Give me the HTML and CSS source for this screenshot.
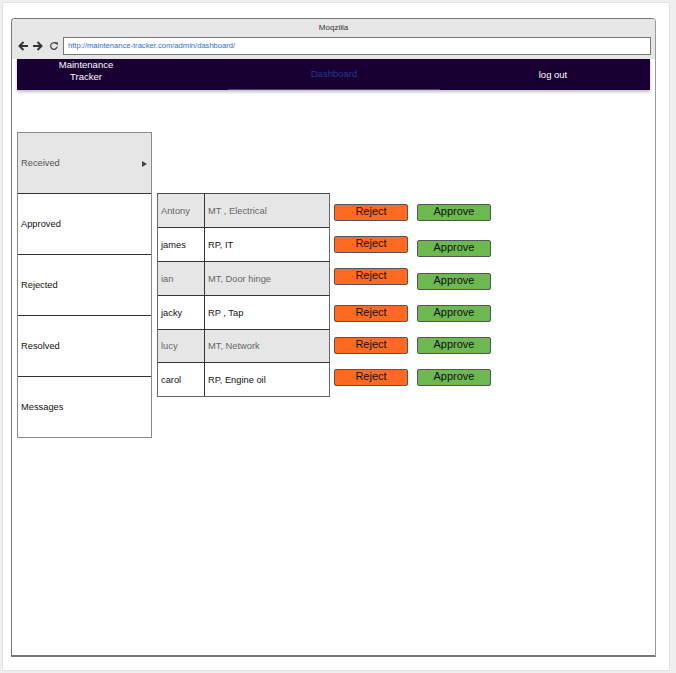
FILE: index.html
```html
<!DOCTYPE html>
<html>
<head>
<meta charset="utf-8">
<link rel="stylesheet" href="styles.css">
</head>
<body>
<div class="frame">
  <div class="window">
    <div class="titlebar">
      <div class="title">Moqzilla</div>
      <div class="urlrow">
        <svg class="ico" width="12" height="12" viewBox="0 0 12 12"><path d="M11 6H2.5M6.5 2L2.5 6L6.5 10" fill="none" stroke="#333" stroke-width="2"/></svg>
        <svg class="ico fwd" width="12" height="12" viewBox="0 0 12 12"><path d="M1 6H9.5M5.5 2L9.5 6L5.5 10" fill="none" stroke="#333" stroke-width="2"/></svg>
        <svg class="ico rel" width="10" height="10" viewBox="0 0 10 10"><path d="M8.2 5.6A3.3 3.3 0 1 1 7.2 2.6" fill="none" stroke="#444" stroke-width="1.2"/><path d="M5.6 1.2L8.8 1.2L8.8 4.4Z" fill="#444"/></svg>
        <div class="url">http://maintenance-tracker.com/admin/dashboard/</div>
      </div>
    </div>
    <div class="content">
      <nav class="navbar">
        <div class="brand">Maintenance<br>Tracker</div>
        <div class="spacer"></div>
        <div class="navmid">Dashboard</div>
        <div class="navright">log out</div>
      </nav>
      <div class="main">
        <div class="sidebar">
          <div class="side-item active">Received<span class="tri"></span></div>
          <div class="side-item">Approved</div>
          <div class="side-item">Rejected</div>
          <div class="side-item">Resolved</div>
          <div class="side-item">Messages</div>
        </div>
        <div class="tbl">
          <div class="row odd"><div class="c1">Antony</div><div class="c2">MT , Electrical</div></div>
          <div class="row"><div class="c1">james</div><div class="c2">RP, IT</div></div>
          <div class="row odd"><div class="c1">ian</div><div class="c2">MT, Door hinge</div></div>
          <div class="row"><div class="c1">jacky</div><div class="c2">RP , Tap</div></div>
          <div class="row odd short"><div class="c1">lucy</div><div class="c2">MT, Network</div></div>
          <div class="row"><div class="c1">carol</div><div class="c2">RP, Engine oil</div></div>
        </div>
        <div class="actions">
          <div class="act"><button class="btn reject">Reject</button><button class="btn approve">Approve</button></div>
          <div class="act"><button class="btn reject">Reject</button><button class="btn approve shift4">Approve</button></div>
          <div class="act"><button class="btn reject">Reject</button><button class="btn approve shift5">Approve</button></div>
          <div class="act gap5"><button class="btn reject">Reject</button><button class="btn approve">Approve</button></div>
          <div class="act"><button class="btn reject">Reject</button><button class="btn approve">Approve</button></div>
          <div class="act"><button class="btn reject">Reject</button><button class="btn approve">Approve</button></div>
        </div>
      </div>
    </div>
  </div>
</div>
</body>
</html>
```
FILE: styles.css
```css
* { box-sizing: border-box; }
html, body { margin: 0; padding: 0; }
body {
  background: #efefef;
  font-family: "Liberation Sans", Arial, sans-serif;
  width: 676px;
  height: 673px;
  overflow: hidden;
}
.frame {
  margin: 2px 0 0 2px;
  width: 668px;
  height: 669px;
  background: #fff;
  border: 1px solid #e2e2e2;
  padding: 15px 0 0 8px;
}
.window {
  width: 645px;
  height: 639px;
  border: 1px solid #777;
  border-right-color: #999;
  border-radius: 4px 4px 0 0;
  display: flex;
  flex-direction: column;
  background: #fff;
}
.titlebar {
  background: #e6e6e6;
  height: 40px;
  border-radius: 3px 3px 0 0;
  flex: none;
}
.title {
  height: 18px;
  line-height: 17px;
  font-size: 8px;
  color: #333;
  text-align: center;
}
.urlrow {
  display: flex;
  align-items: center;
  height: 18px;
  padding-left: 5px;
}
.ico { flex: none; display: block; }
.fwd { margin-left: 3px; }
.rel { margin-left: 5px; margin-right: 4px; }
.url {
  width: 588px;
  height: 18px;
  border: 1px solid #777;
  background: #fff;
  font-size: 7.6px;
  line-height: 16px;
  color: #2d6fd4;
  padding-left: 4px;
}
.content {
  flex: 1;
  padding: 0 5px;
  border-bottom: 1px solid #777;
}
.navbar {
  height: 31px;
  background: #190033;
  display: grid;
  grid-template-columns: 138px 73px 212px 1fr;
  align-items: center;
  box-shadow: 0 2px 3px rgba(0,0,0,0.25);
  font-size: 9.5px;
}
.brand {
  color: #fff;
  text-align: center;
  line-height: 12px;
  padding-bottom: 7px;
}
.navmid {
  height: 31px;
  line-height: 30px;
  text-align: center;
  color: #22398a;
  border-bottom: 1px solid #4c3e66;
}
.navright {
  color: #fff;
  text-align: center;
  padding-left: 16px;
  padding-bottom: 1px;
}
.main {
  display: flex;
  align-items: flex-start;
  margin-top: 42px;
  font-size: 9.3px;
}
.sidebar {
  width: 135px;
  border: 1px solid #8a8a8a;
  flex: none;
}
.side-item {
  height: 61px;
  border-top: 1px solid #333;
  display: flex;
  align-items: center;
  padding-left: 3px;
  color: #111;
  position: relative;
}
.side-item:first-child { border-top: none; height: 60px; }
.side-item.active {
  background: #e6e6e6;
  color: #555;
}
.tri {
  position: absolute;
  right: 4px;
  top: 28px;
  width: 0;
  height: 0;
  border-left: 5px solid #444;
  border-top: 3px solid transparent;
  border-bottom: 3px solid transparent;
}
.tbl {
  margin-top: 61px;
  margin-left: 5px;
  width: 173px;
  border: 1px solid #666;
  border-top-color: #444;
  flex: none;
}
.row {
  display: flex;
  height: 34px;
  border-top: 1px solid #333;
  color: #111;
}
.row:first-child { border-top: none; height: 33px; }
.row.short { height: 33px; }
.row.odd { background: #e6e6e6; color: #666; }
.c1 {
  width: 47px;
  border-right: 1px solid #333;
  display: flex;
  align-items: center;
  padding-left: 3px;
}
.c2 {
  flex: 1;
  display: flex;
  align-items: center;
  padding-left: 3px;
}
.actions {
  margin-top: 72px;
  margin-left: 4px;
  display: flex;
  flex-direction: column;
  gap: 15px;
}
.act {
  display: flex;
  align-items: flex-start;
  gap: 9px;
  height: 17px;
}
.act.gap5 { margin-top: 5px; }
.btn {
  width: 74px;
  height: 17px;
  border: 1px solid #555;
  border-radius: 2px;
  font-family: "Liberation Sans", Arial, sans-serif;
  font-size: 11px;
  line-height: 13px;
  padding: 0 0 2px 0;
  color: #111;
  text-align: center;
  margin: 0;
}
.reject { background: #ff6a20; }
.approve { background: #6cb94f; }
.shift4 { margin-top: 4px; }
.shift5 { margin-top: 5px; }
```
